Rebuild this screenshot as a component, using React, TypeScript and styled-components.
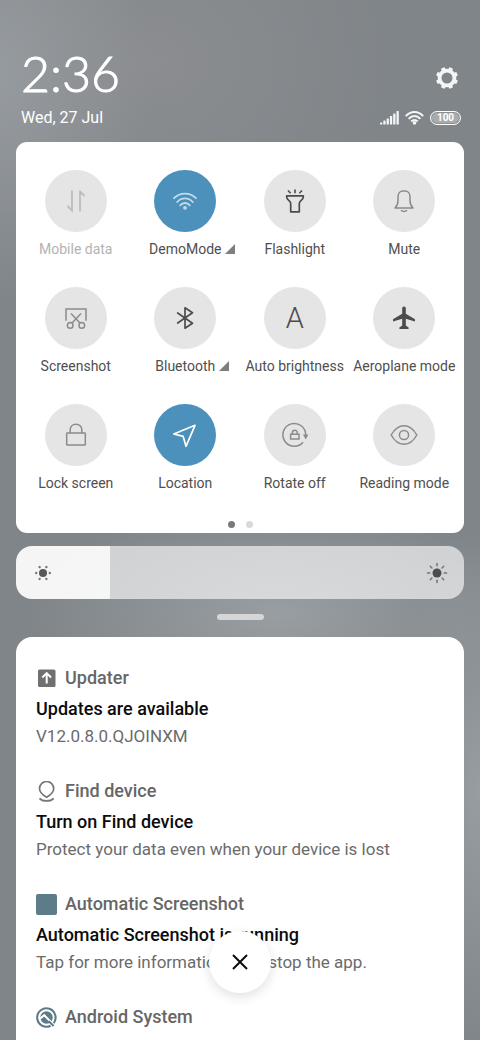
import React, { useState } from 'react';
import styled, { createGlobalStyle, css } from 'styled-components';

const GlobalStyle = createGlobalStyle`
  *, *::before, *::after { box-sizing: border-box; }
  body { margin: 0; font-family: Roboto, "Liberation Sans", sans-serif; }
  button { font: inherit; border: 0; padding: 0; cursor: pointer; }
  h2, h3, p, ul { margin: 0; padding: 0; }
`;

const Shade = styled.main`
  height: 100vh;
  overflow: hidden;
  display: flex;
  flex-direction: column;
  padding: 45px 16px 0;
  background:
    radial-gradient(ellipse 150px 230px at 0% 7%, #969b9f 0%, rgba(150, 155, 159, 0) 100%),
    radial-gradient(ellipse 250px 110px at 58% 59%, #989ea2 0%, rgba(152, 158, 162, 0) 100%),
    radial-gradient(ellipse 90px 260px at 100% 76%, #989da1 0%, rgba(152, 157, 161, 0) 100%),
    radial-gradient(ellipse 240px 200px at 32% 6%, #8b8d90 0%, rgba(139, 141, 144, 0) 100%),
    #808589;

  & > * { flex-shrink: 0; }
`;

const Header = styled.header`
  display: grid;
  grid-template-columns: 1fr auto;
  align-items: center;
  padding: 0 3px 0 5px;
  color: #fff;
`;

const Clock = styled.time`
  padding-bottom: 3px;
  font-family: Lato, Roboto, sans-serif;
  font-size: 50px;
  font-weight: 300;
  line-height: 56px;
  -webkit-text-stroke: 1px #fff;
`;

const DateText = styled.time`
  font-size: 16px;
  line-height: 28px;
`;

const SettingsButton = styled.button`
  justify-self: end;
  display: flex;
  margin-top: 7px;
  padding-right: 3px;
  background: none;
`;

const StatusIcons = styled.div`
  display: flex;
  align-items: center;
  gap: 6px;
`;

const Battery = styled.span`
  display: flex;
  align-items: center;
  justify-content: center;
  width: 31px;
  height: 14px;
  border: 1px solid #fff;
  border-radius: 7px;
  background: #a9acae;
  box-shadow: inset 0 0 0 1px #8b8f92;
  font-size: 10px;
  font-weight: 700;
  line-height: 12px;
`;

const QuickPanel = styled.section`
  margin-top: 10px;
  padding: 28px 5px 5px;
  border-radius: 11px;
  background: #fff;
`;

const TileGrid = styled.div`
  display: grid;
  grid-template-columns: repeat(4, minmax(0, 1fr));
  row-gap: 28px;
`;

const Tile = styled.button<{ $disabled?: boolean }>`
  display: flex;
  flex-direction: column;
  align-items: center;
  gap: 7px;
  background: none;
  color: ${(p) => (p.$disabled ? '#b3b3b3' : '#4f4f4f')};
`;

type Tone = 'off' | 'soft' | 'strong' | 'active' | 'activeSoft';
const toneColor: Record<Tone, string> = {
  off: '#bcbcbc',
  soft: '#8b8b8b',
  strong: '#4c4c4c',
  active: '#ffffff',
  activeSoft: '#c3dcec',
};

const TileCircle = styled.span<{ $tone: Tone }>`
  display: flex;
  align-items: center;
  justify-content: center;
  width: 62px;
  height: 62px;
  border-radius: 50%;
  background: ${(p) => (p.$tone.startsWith('active') ? '#4c90bc' : '#e5e5e5')};
  color: ${(p) => toneColor[p.$tone]};
`;

const TileLabel = styled.span`
  display: flex;
  align-items: center;
  font-size: 14px;
  line-height: 20px;
  white-space: nowrap;
`;

const ExpandMark = styled.svg`
  margin: 0 -14px 0 4px;
  color: #7f7f7f;
`;

const TileIcon = styled.svg`
  fill: none;
  stroke: currentColor;
  stroke-width: 1.5;
`;

const LetterIcon = styled.span`
  font-size: 29px;
  font-weight: 300;
  line-height: 30px;
`;

const Pager = styled.div`
  display: flex;
  justify-content: center;
  gap: 11px;
  margin-top: 28px;
`;

const PagerDot = styled.span<{ $current?: boolean }>`
  width: 7px;
  height: 7px;
  border-radius: 50%;
  background: ${(p) => (p.$current ? '#7a7a7a' : '#d9d9d9')};
`;

const Brightness = styled.label`
  position: relative;
  display: flex;
  margin-top: 13px;
  border-radius: 16px;
  overflow: hidden;
`;

const thumb = css`
  appearance: none;
  width: 1px;
  height: 53px;
  border: 0;
  background: transparent;
`;

const BrightnessInput = styled.input`
  appearance: none;
  width: 100%;
  height: 53px;
  margin: 0;
  background: linear-gradient(
    to right,
    rgba(255, 255, 255, 0.92) var(--level),
    rgba(255, 255, 255, 0.62) var(--level)
  );
  &::-webkit-slider-thumb { ${thumb} }
  &::-moz-range-thumb { ${thumb} }
`;

const BrightnessIcon = styled.svg<{ $side: 'left' | 'right' }>`
  position: absolute;
  top: 15px;
  ${(p) => p.$side}: 15px;
  stroke: #767676;
  stroke-width: 1.5;
  stroke-linecap: round;
  pointer-events: none;
`;

const Handle = styled.span`
  align-self: center;
  width: 47px;
  height: 6px;
  margin: 15px 0 17px;
  border-radius: 3px;
  background: #d4d6d8;
`;

const Notifications = styled.section`
  flex-grow: 1;
  padding: 29px 20px;
  border-radius: 16px 16px 0 0;
  background: #fff;
`;

const Notice = styled.article`
  margin-bottom: 29px;
`;

const NoticeApp = styled.div`
  display: flex;
  align-items: center;
  gap: 8px;
  height: 24px;
  color: #666;
`;

const AppName = styled.h2`
  font-size: 18px;
  font-weight: 500;
  line-height: 24px;
`;

const NoticeTitle = styled.h3`
  margin-top: 6px;
  color: #0c0c0c;
  font-size: 18px;
  font-weight: 500;
  line-height: 26px;
`;

const NoticeText = styled.p`
  color: #6b6b6b;
  font-size: 17px;
  line-height: 28px;
`;

const CloseButton = styled.button`
  position: fixed;
  bottom: 47px;
  left: 50%;
  display: flex;
  align-items: center;
  justify-content: center;
  width: 62px;
  height: 62px;
  margin-left: -31px;
  border-radius: 50%;
  background: #fff;
  box-shadow: 0 4px 12px rgba(0, 0, 0, 0.12);
`;

const Glyph = ({ children }: { children: React.ReactNode }) => (
  <TileIcon width="30" height="30" viewBox="-15 -15 30 30" aria-hidden="true">
    {children}
  </TileIcon>
);

type TileData = { label: string; tone: Tone; icon: React.ReactNode; expandable?: boolean };

const tiles: TileData[] = [
  {
    label: 'Mobile data',
    tone: 'off',
    icon: (
      <Glyph>
        <path strokeWidth="1.8" d="M-4-10.5V9.5L-8.5 5M4-10.5V10.5M4-9.5L8.5-5" />
      </Glyph>
    ),
  },
  {
    label: 'DemoMode',
    tone: 'activeSoft',
    expandable: true,
    icon: (
      <Glyph>
        <path
          strokeWidth="1.8"
          strokeLinecap="round"
          d="M-11-2.8C-5-9 5-9 11-2.8M-7.8 1C-3.5-3.8 3.5-3.8 7.8 1M-4.8 4.4C-2 1.2 2 1.2 4.8 4.4"
        />
        <circle cx="0" cy="6.8" r="1.9" fill="currentColor" stroke="none" />
      </Glyph>
    ),
  },
  {
    label: 'Flashlight',
    tone: 'strong',
    icon: (
      <Glyph>
        <path
          strokeWidth="1.7"
          strokeLinejoin="round"
          d="M-8.3-5.2H8.3V-4C8.3-0.6 4.3-0.8 4.3 2.5V10.8H-4.3V2.5C-4.3-0.8-8.3-0.6-8.3-4Z"
        />
        <path strokeWidth="1.6" d="M0-11.5V-7.8M-7-10.5L-4.4-7.8M7-10.5L4.4-7.8" />
      </Glyph>
    ),
  },
  {
    label: 'Mute',
    tone: 'soft',
    icon: (
      <Glyph>
        <path
          strokeLinejoin="round"
          d="M-9 7C-6.8 5-6 3-6-0.5V-4C-6-7.8-3.6-10-1-10H1C3.6-10 6-7.8 6-4V-0.5C6 3 6.8 5 9 7Z"
        />
        <path d="M-3 9.3C-1.5 10.8 1.5 10.8 3 9.3" />
      </Glyph>
    ),
  },
  {
    label: 'Screenshot',
    tone: 'soft',
    icon: (
      <Glyph>
        <path d="M-10 2.8V-9H10V2.8M-5-4.6L4.2 5.2M5-4.6L-4.2 5.2" />
        <circle cx="-5.8" cy="7.4" r="2.8" />
        <circle cx="5.8" cy="7.4" r="2.8" />
      </Glyph>
    ),
  },
  {
    label: 'Bluetooth',
    tone: 'strong',
    expandable: true,
    icon: (
      <Glyph>
        <path
          strokeWidth="1.7"
          strokeLinejoin="round"
          strokeLinecap="round"
          d="M-7.3-5L7.5 5.2L0 10.2V-10.2L7.5-5.2L-7.3 5"
        />
      </Glyph>
    ),
  },
  { label: 'Auto brightness', tone: 'strong', icon: <LetterIcon aria-hidden="true">A</LetterIcon> },
  {
    label: 'Aeroplane mode',
    tone: 'strong',
    icon: (
      <Glyph>
        <path
          fill="currentColor"
          stroke="none"
          d="M0-11.5C1.2-11.5 1.8-10.6 1.8-9.4V-4.2L11 1.2V3.6L1.8 0.8V7.6L4.6 9.4V11H-4.6V9.4L-1.8 7.6V0.8L-11 3.6V1.2L-1.8-4.2V-9.4C-1.8-10.6-1.2-11.5 0-11.5Z"
        />
      </Glyph>
    ),
  },
  {
    label: 'Lock screen',
    tone: 'soft',
    icon: (
      <Glyph>
        <rect x="-9.3" y="-2" width="18.6" height="12" rx="0.6" />
        <path d="M-5.8-2V-5.2C-5.8-12.6 5.8-12.6 5.8-5.2V-2" />
      </Glyph>
    ),
  },
  {
    label: 'Location',
    tone: 'active',
    icon: (
      <Glyph>
        <path strokeWidth="1.7" strokeLinejoin="round" d="M10-9.7L-11.2-1L-1.8 1.4L1 11.3Z" />
      </Glyph>
    ),
  },
  {
    label: 'Rotate off',
    tone: 'soft',
    icon: (
      <Glyph>
        <path d="M8 7.2A11.4 11.4 0 1 1 10.7 0" />
        <path fill="currentColor" stroke="none" d="M8-0.6H13.4L10.7 4.4Z" />
        <rect x="-4.4" y="-0.8" width="8.4" height="4.8" />
        <path d="M-2.6-1V-2.4C-2.6-5.6 2.2-5.6 2.2-2.4V-1" />
      </Glyph>
    ),
  },
  {
    label: 'Reading mode',
    tone: 'soft',
    icon: (
      <Glyph>
        <path d="M-12.8 0C-6-12.4 6-12.4 12.8 0C6 12.4-6 12.4-12.8 0Z" strokeLinejoin="round" />
        <circle cx="0" cy="0" r="4.6" />
      </Glyph>
    ),
  },
];

const UpdaterIcon = () => (
  <svg width="21" height="21" viewBox="0 0 21 21" aria-hidden="true">
    <rect x="2" y="1.5" width="17.5" height="17.5" rx="1.5" fill="#6f7072" />
    <path d="M10.7 15.5V5.5M6.3 9.5L10.7 5.1L15.1 9.5" fill="none" stroke="#fff" strokeWidth="2" />
  </svg>
);

const FindIcon = () => (
  <svg width="21" height="21" viewBox="0 0 21 21" fill="none" stroke="#777" strokeWidth="1.7" aria-hidden="true">
    <path d="M10.6 16.2C8 14.8 3.5 11.6 3.5 7.6A7.1 7.1 0 0 1 17.7 7.6C17.7 11.6 13.2 14.8 10.6 16.2Z" />
    <path d="M3.5 17.4C6.5 20.8 14.7 20.8 17.7 17.4" />
  </svg>
);

const SquareIcon = () => (
  <svg width="21" height="21" viewBox="0 0 21 21" aria-hidden="true">
    <rect width="21" height="21" rx="2" fill="#5d7b88" />
  </svg>
);

const SystemIcon = () => (
  <svg width="21" height="21" viewBox="0 0 21 21" fill="none" aria-hidden="true">
    <path d="M17.2 16.7A9.2 9.2 0 1 0 14.6 18.7" stroke="#5d7b88" strokeWidth="2.1" />
    <circle cx="10.5" cy="10.5" r="6.2" fill="#5d7b88" />
    <path d="M3.4 12.2L8.2 8.2L19 19" stroke="#fff" strokeWidth="2" />
    <path d="M12.8 14.2L17.6 19" stroke="#5d7b88" strokeWidth="2" />
  </svg>
);

const notices = [
  { app: 'Updater', icon: <UpdaterIcon />, title: 'Updates are available', text: 'V12.0.8.0.QJOINXM' },
  {
    app: 'Find device',
    icon: <FindIcon />,
    title: 'Turn on Find device',
    text: 'Protect your data even when your device is lost',
  },
  {
    app: 'Automatic Screenshot',
    icon: <SquareIcon />,
    title: 'Automatic Screenshot is running',
    text: 'Tap for more information or to stop the app.',
  },
  {
    app: 'Android System',
    icon: <SystemIcon />,
    title: 'Charging this device via USB',
    text: 'Tap for more options.',
  },
];

const GearIcon = () => (
  <svg width="22" height="22" viewBox="-11 -11 22 22" aria-hidden="true">
    <circle r="7.4" fill="none" stroke="#f4f5f5" strokeWidth="3.8" />
    {[22.5, 67.5, 112.5, 157.5, 202.5, 247.5, 292.5, 337.5].map((angle) => (
      <rect key={angle} x="-2.1" y="-11" width="4.2" height="4" rx="1" fill="#f4f5f5" transform={`rotate(${angle})`} />
    ))}
  </svg>
);

const SignalIcon = () => (
  <svg width="19" height="14" viewBox="0 0 19 14" fill="#f4f5f5" aria-label="Signal" role="img">
    {[2, 4, 6, 8.5, 11, 13.5].map((h, i) => (
      <rect key={h} x={i * 3.3} y={13.5 - h} width="2.3" height={h} rx="0.6" />
    ))}
  </svg>
);

const WifiIcon = () => (
  <svg width="19" height="14" viewBox="0 0 19 14" fill="none" stroke="#f4f5f5" strokeWidth="1.9" aria-label="Wi-Fi" role="img">
    <path d="M0.8 5.2C5.6-0.4 13.4-0.4 18.2 5.2M3.6 7.9C7 4.1 12 4.1 15.4 7.9M6.3 10.5C8.2 8.4 10.8 8.4 12.7 10.5" />
    <circle cx="9.5" cy="11.9" r="1.8" fill="#f4f5f5" stroke="none" />
  </svg>
);

export default function App() {
  const [level, setLevel] = useState(21);

  return (
    <>
      <GlobalStyle />
      <Shade>
        <Header>
          <Clock>2:36</Clock>
          <SettingsButton aria-label="Settings">
            <GearIcon />
          </SettingsButton>
          <DateText>Wed, 27 Jul</DateText>
          <StatusIcons>
            <SignalIcon />
            <WifiIcon />
            <Battery>100</Battery>
          </StatusIcons>
        </Header>

        <QuickPanel aria-label="Quick settings">
          <TileGrid>
            {tiles.map((tile) => (
              <Tile key={tile.label} $disabled={tile.tone === 'off'}>
                <TileCircle $tone={tile.tone}>{tile.icon}</TileCircle>
                <TileLabel>
                  {tile.label}
                  {tile.expandable && (
                    <ExpandMark width="10" height="10" viewBox="0 0 10 10" aria-hidden="true">
                      <path d="M10 0V10H0Z" fill="currentColor" />
                    </ExpandMark>
                  )}
                </TileLabel>
              </Tile>
            ))}
          </TileGrid>
          <Pager>
            <PagerDot $current />
            <PagerDot />
          </Pager>
        </QuickPanel>

        <Brightness>
          <BrightnessInput
            type="range"
            min={0}
            max={100}
            value={level}
            aria-label="Brightness"
            onChange={(e) => setLevel(Number(e.target.value))}
            style={{ '--level': `${level}%` } as React.CSSProperties}
          />
          <BrightnessIcon $side="left" width="24" height="24" viewBox="-12 -12 24 24" aria-hidden="true">
            <circle r="4" fill="#585858" stroke="none" />
            {[30, 90, 150, 210, 270, 330].map((a) => (
              <circle key={a} cy="-6.8" r="1.2" fill="#767676" stroke="none" transform={`rotate(${a})`} />
            ))}
          </BrightnessIcon>
          <BrightnessIcon $side="right" width="24" height="24" viewBox="-12 -12 24 24" aria-hidden="true">
            <circle r="4.5" fill="#4c4c4c" stroke="none" />
            {[0, 45, 90, 135, 180, 225, 270, 315].map((a) => (
              <path key={a} d="M0-7.2V-9.5" transform={`rotate(${a})`} />
            ))}
          </BrightnessIcon>
        </Brightness>

        <Handle />

        <Notifications aria-label="Notifications">
          {notices.map((n) => (
            <Notice key={n.app}>
              <NoticeApp>
                {n.icon}
                <AppName>{n.app}</AppName>
              </NoticeApp>
              <NoticeTitle>{n.title}</NoticeTitle>
              <NoticeText>{n.text}</NoticeText>
            </Notice>
          ))}
        </Notifications>

        <CloseButton aria-label="Clear notifications">
          <svg width="16" height="16" viewBox="0 0 16 16" aria-hidden="true">
            <path d="M1 1L15 15M15 1L1 15" stroke="#0c0c0c" strokeWidth="2" />
          </svg>
        </CloseButton>
      </Shade>
    </>
  );
}
